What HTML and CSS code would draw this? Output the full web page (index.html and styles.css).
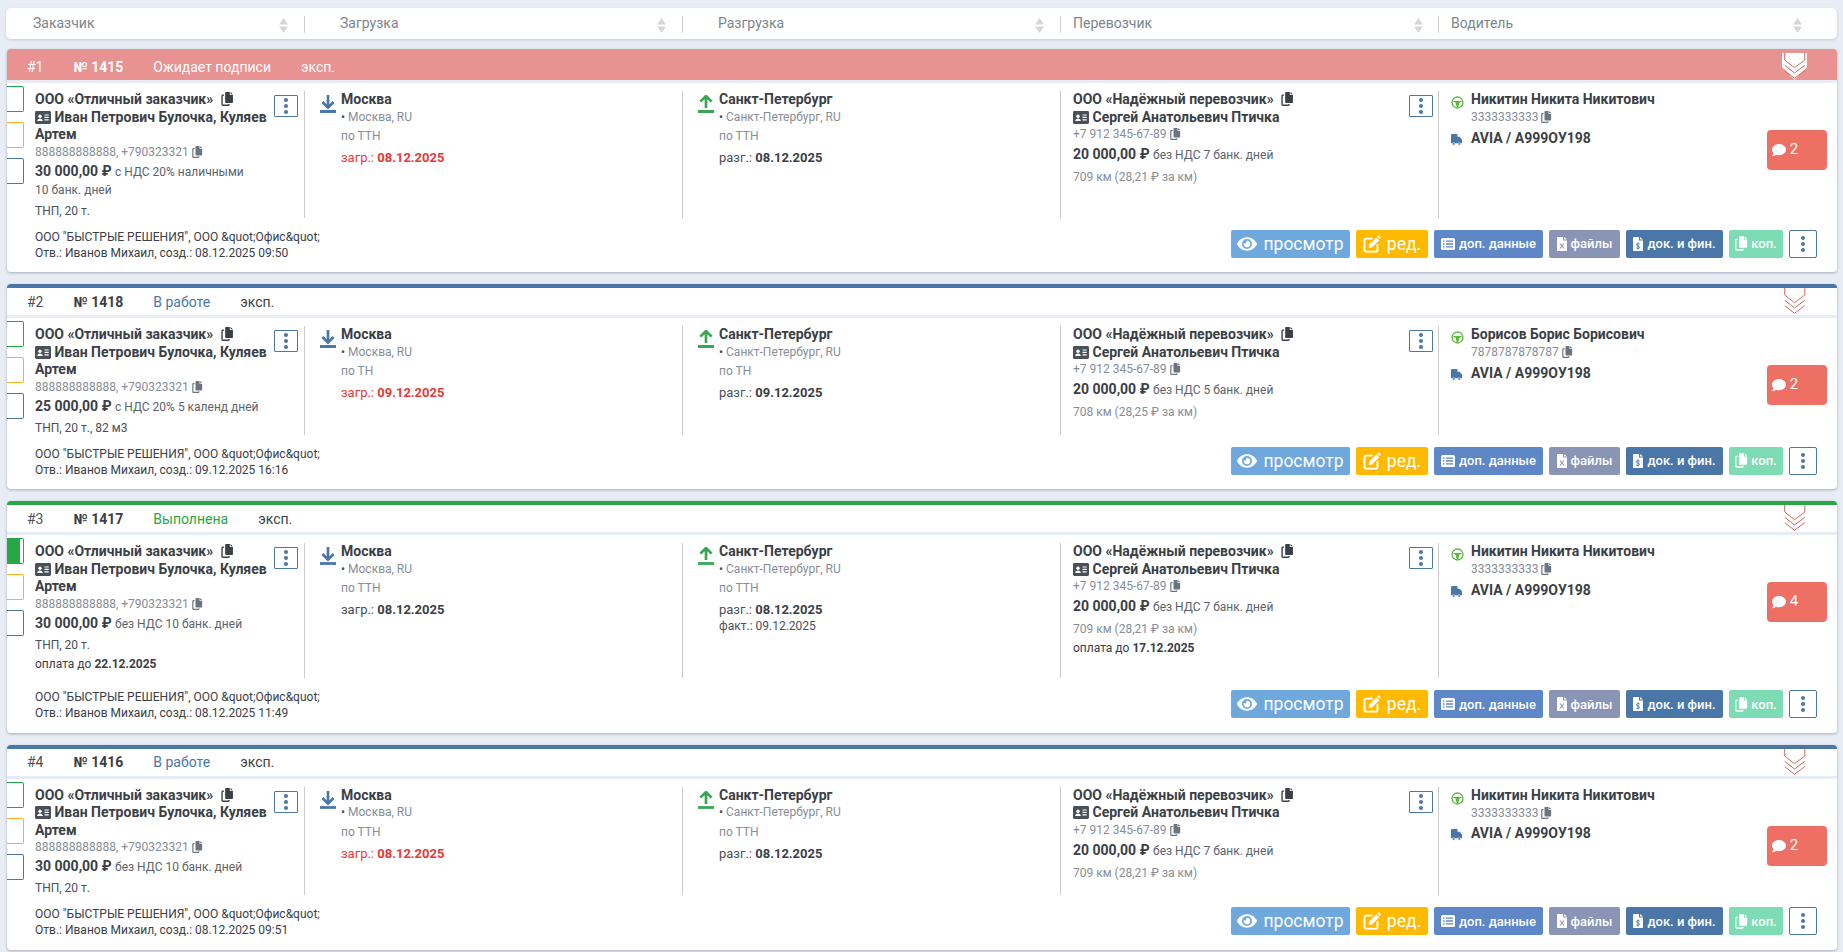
FILE: index.html
```html
<!DOCTYPE html>
<html lang="ru">
<head>
<meta charset="utf-8">
<title>Заявки</title>
<link rel="stylesheet" href="styles.css">
</head>
<body>
<svg class="sprite" width="0" height="0" aria-hidden="true">
  <symbol id="i-copy" viewBox="0 0 16 18"><path d="M6 0h5v4h4v9.2c0 .6-.4 1-1 1H6c-.6 0-1-.4-1-1V1c0-.6.4-1 1-1zM12 0l3 3h-3z" fill="currentColor"/><path d="M3.6 4H2c-.6 0-1 .4-1 1v11c0 .6.4 1 1 1h7c.6 0 1-.4 1-1v-.6" fill="none" stroke="currentColor" stroke-width="1.8"/></symbol>
  <symbol id="i-id" viewBox="0 0 16 13"><rect width="16" height="13" rx="1.4" fill="currentColor"/><circle cx="5" cy="5.2" r="1.7" fill="#fff"/><path d="M2.2 10c0-1.8 1.2-2.6 2.8-2.6s2.8.8 2.8 2.6z" fill="#fff"/><path d="M9.5 4h4.2M9.5 6.4h4.2M9.5 8.8h4.2" stroke="#fff" stroke-width="1.2"/></symbol>
  <symbol id="i-down" viewBox="0 0 16 18"><path d="M8 0v12.500M2.400 7 8 12.600 13.600 7" fill="none" stroke="#4a76a8" stroke-width="2.700"/><path d="M0 16.500h16" stroke="#4a76a8" stroke-width="2.800"/></symbol>
  <symbol id="i-up" viewBox="0 0 16 18"><path d="M8 13V1M2.400 6.600 8 1l5.600 5.600" fill="none" stroke="#3aa655" stroke-width="2.700"/><path d="M0 16.500h16" stroke="#3aa655" stroke-width="2.800"/></symbol>
  <symbol id="i-wheel" viewBox="0 0 14 14"><circle cx="7" cy="7" r="5.900" fill="none" stroke="#5cb83c" stroke-width="1.400"/><path d="M1.600 5.400h10.800L9 7.200 7.900 12H6.100L5 7.200z" fill="#5cb83c"/></symbol>
  <symbol id="i-truck" viewBox="0 0 12 14"><path d="M0 2.500C0 1.700.5 1 1.200 1H7v3h2.400L12 7v4H0z" fill="#4a76a8"/><circle cx="3" cy="11.800" r="1.400" fill="#4a76a8" stroke="#fff" stroke-width=".6"/><circle cx="9" cy="11.800" r="1.400" fill="#4a76a8" stroke="#fff" stroke-width=".6"/></symbol>
  <symbol id="i-comment" viewBox="0 0 512 512"><path d="M256 32C114.600 32 0 125.100 0 240c0 49.600 21.400 95 57 130.700C44.500 421.100 2.700 466 2.200 466.500c-2.200 2.300-2.800 5.700-1.500 8.700S4.800 480 8 480c66.300 0 116-31.800 140.600-51.400 32.700 12.300 69 19.400 107.400 19.400 141.400 0 256-93.100 256-208S397.400 32 256 32z" fill="currentColor"/></symbol>
  <symbol id="i-eye" viewBox="0 0 576 512"><path d="M572.520 241.400C518.290 135.590 410.930 64 288 64S57.680 135.640 3.480 241.410a32.400 32.400 0 0 0 0 29.190C57.710 376.410 165.070 448 288 448s230.320-71.640 284.520-177.410a32.400 32.400 0 0 0 0-29.190zM288 400a144 144 0 1 1 144-144 143.930 143.930 0 0 1-144 144zm0-240a95.310 95.310 0 0 0-25.310 3.790 47.850 47.850 0 0 1-66.900 66.900A95.780 95.780 0 1 0 288 160z" fill="currentColor"/></symbol>
  <symbol id="i-edit" viewBox="0 0 18 18"><path d="M14.500 10v5c0 1-.7 1.600-1.600 1.600H3.100c-.9 0-1.600-.7-1.600-1.600V5.200c0-.9.7-1.600 1.600-1.600h6" fill="none" stroke="currentColor" stroke-width="1.900" stroke-linecap="round"/><path d="M6.200 9.600 13.400 2.400l2.900 2.900-7.200 7.200-3.500.6zM14.300 1.500l.7-.7c.4-.4 1-.4 1.400 0l1 1c.4.4.4 1 0 1.400l-.7.700z" fill="currentColor"/></symbol>
  <symbol id="i-list" viewBox="0 0 14 12"><rect width="14" height="12" rx="1.600" fill="currentColor"/><path d="M2 3.200h1.500M5 3.200h7M2 6h1.500M5 6h7M2 8.800h1.500M5 8.800h7" stroke="#5d87c7" stroke-width="1.300"/></symbol>
  <symbol id="i-xls" viewBox="0 0 10 14"><path d="M1 0h5v3.500h4V13c0 .6-.4 1-1 1H1c-.6 0-1-.4-1-1V1c0-.6.4-1 1-1zM7 0l3 2.600H7z" fill="currentColor"/><path d="M3 6.500l4 5M7 6.500l-4 5" stroke="#8a94b5" stroke-width="1.100"/></symbol>
  <symbol id="i-inv" viewBox="0 0 10 14"><path d="M1 0h5v3.500h4V13c0 .6-.4 1-1 1H1c-.6 0-1-.4-1-1V1c0-.6.4-1 1-1zM7 0l3 2.600H7z" fill="currentColor"/><path d="M6.600 7C6.200 6.400 3.400 6.200 3.400 7.700s3.200 1.100 3.200 2.600-2.800 1.300-3.200.7M5 5.500v7" fill="none" stroke="#4a76a8" stroke-width=".9"/></symbol>
  <symbol id="i-dup" viewBox="0 0 16 18"><path d="M6 0h5v4h4v9.200c0 .6-.4 1-1 1H6c-.6 0-1-.4-1-1V1c0-.6.4-1 1-1zM12 0l3 3h-3z" fill="currentColor"/><path d="M3.600 4H2c-.6 0-1 .4-1 1v11c0 .6.4 1 1 1h7c.6 0 1-.4 1-1v-.6" fill="none" stroke="currentColor" stroke-width="1.600"/></symbol>
  <symbol id="i-sort" viewBox="0 0 9 15"><path d="M4.500 0 9 6.600H0zM4.500 15 0 8.400h9z" fill="#d3d7dc"/></symbol>
  <symbol id="i-ribbon" viewBox="0 0 25 31"><path d="M0 0h25v18L12.500 31 0 18z" fill="#fff"/><path d="M2.700 0v11l9.800 7.700 10.300-7.700V0" fill="none" stroke="#d4685c" stroke-width="1"/><path d="M2.700 16.300l9.800 7.700 10.300-7.700M2.700 21.600l9.800 7.700 10.300-7.700" fill="none" stroke="#d4685c" stroke-width="1"/></symbol>
</svg>

<div class="page">
  <div class="thead">
    <div class="th th-first"><span>Заказчик</span><svg class="sort"><use href="#i-sort"/></svg></div>
    <div class="th th-wide"><span>Загрузка</span><svg class="sort"><use href="#i-sort"/></svg></div>
    <div class="th th-wide"><span>Разгрузка</span><svg class="sort"><use href="#i-sort"/></svg></div>
    <div class="th"><span>Перевозчик</span><svg class="sort"><use href="#i-sort"/></svg></div>
    <div class="th th-last"><span>Водитель</span><svg class="sort"><use href="#i-sort"/></svg></div>
  </div>

  <article class="card card-red">
    <header class="strip">
      <span class="idx">#1</span><b class="num">№ 1415</b><span class="status">Ожидает подписи</span><span class="kind">эксп.</span>
      <svg class="ribbon"><use href="#i-ribbon"/></svg>
    </header>
    <div class="body">
      <div class="cols">
        <div class="col col-client">
          <div class="marks"><i class="mark m-green"></i><i class="mark m-orange"></i><i class="mark m-blue"></i></div>
          <div class="info">
            <div class="title">ООО «Отличный заказчик» <svg class="copy copy-lg"><use href="#i-copy"/></svg></div>
            <div class="title"><svg class="idc"><use href="#i-id"/></svg> Иван Петрович Булочка, Куляев Артем</div>
            <div class="phone">888888888888, +790323321 <svg class="copy"><use href="#i-copy"/></svg></div>
            <div class="price"><b>30 000,00 ₽</b> <small>с НДС 20% наличными <span class="nw">10 банк. дней</span></small></div>
            <div class="cargo">ТНП, 20 т.</div>
          </div>
          <button class="kebab" type="button"><i></i><i></i><i></i></button>
        </div>
        <div class="col col-point">
          <svg class="dir"><use href="#i-down"/></svg>
          <div class="info">
            <div class="title">Москва</div>
            <div class="place"><i class="dot">•</i> Москва, RU</div>
            <div class="doc">по ТТН</div>
            <div class="date late">загр.: <b>08.12.2025</b></div>
          </div>
        </div>
        <div class="col col-point">
          <svg class="dir"><use href="#i-up"/></svg>
          <div class="info">
            <div class="title">Санкт-Петербург</div>
            <div class="place"><i class="dot">•</i> Санкт-Петербург, RU</div>
            <div class="doc">по ТТН</div>
            <div class="date">разг.: <b>08.12.2025</b></div>
          </div>
        </div>
        <div class="col col-carrier">
          <div class="info">
            <div class="title">ООО «Надёжный перевозчик» <svg class="copy copy-lg"><use href="#i-copy"/></svg></div>
            <div class="title"><svg class="idc"><use href="#i-id"/></svg> Сергей Анатольевич Птичка</div>
            <div class="phone">+7 912 345-67-89 <svg class="copy"><use href="#i-copy"/></svg></div>
            <div class="price price-c"><b>20 000,00 ₽</b> <small>без НДС 7 банк. дней</small></div>
            <div class="km">709 км (28,21 ₽ за км)</div>
          </div>
          <button class="kebab" type="button"><i></i><i></i><i></i></button>
        </div>
        <div class="col col-driver">
          <div class="driver">
            <div class="dline"><svg class="wheel"><use href="#i-wheel"/></svg><div class="title">Никитин Никита Никитович</div></div>
            <div class="phone dphone">3333333333 <svg class="copy"><use href="#i-copy"/></svg></div>
            <div class="dline dtruck"><svg class="truck"><use href="#i-truck"/></svg><div class="title">AVIA / А999ОУ198</div></div>
          </div>
          <div class="badge"><svg><use href="#i-comment"/></svg> 2</div>
        </div>
      </div>
      <div class="foot">
        <div class="meta">ООО "БЫСТРЫЕ РЕШЕНИЯ", ООО &amp;quot;Офис&amp;quot;<br>Отв.: Иванов Михаил, созд.: 08.12.2025 09:50</div>
        <div class="actions">
          <a class="btn btn-lg b-view"><svg class="ic-eye"><use href="#i-eye"/></svg>просмотр</a>
          <a class="btn btn-lg b-edit"><svg class="ic-edit"><use href="#i-edit"/></svg>ред.</a>
          <a class="btn b-extra"><svg class="ic-list"><use href="#i-list"/></svg>доп. данные</a>
          <a class="btn b-files"><svg class="ic-file"><use href="#i-xls"/></svg>файлы</a>
          <a class="btn b-docs"><svg class="ic-file"><use href="#i-inv"/></svg>док. и фин.</a>
          <a class="btn b-copy"><svg class="ic-dup"><use href="#i-dup"/></svg>коп.</a>
          <button class="kebab kebab-lg" type="button"><i></i><i></i><i></i></button>
        </div>
      </div>
    </div>
  </article>

  <article class="card card-blue">
    <header class="strip">
      <span class="idx">#2</span><b class="num">№ 1418</b><span class="status">В работе</span><span class="kind">эксп.</span>
      <svg class="ribbon"><use href="#i-ribbon"/></svg>
    </header>
    <div class="body">
      <div class="cols">
        <div class="col col-client">
          <div class="marks"><i class="mark m-green"></i><i class="mark m-orange"></i><i class="mark m-blue"></i></div>
          <div class="info">
            <div class="title">ООО «Отличный заказчик» <svg class="copy copy-lg"><use href="#i-copy"/></svg></div>
            <div class="title"><svg class="idc"><use href="#i-id"/></svg> Иван Петрович Булочка, Куляев Артем</div>
            <div class="phone">888888888888, +790323321 <svg class="copy"><use href="#i-copy"/></svg></div>
            <div class="price"><b>25 000,00 ₽</b> <small>с НДС 20% <span class="nw">5 календ дней</span></small></div>
            <div class="cargo">ТНП, 20 т., 82 м3</div>
          </div>
          <button class="kebab" type="button"><i></i><i></i><i></i></button>
        </div>
        <div class="col col-point">
          <svg class="dir"><use href="#i-down"/></svg>
          <div class="info">
            <div class="title">Москва</div>
            <div class="place"><i class="dot">•</i> Москва, RU</div>
            <div class="doc">по ТН</div>
            <div class="date late">загр.: <b>09.12.2025</b></div>
          </div>
        </div>
        <div class="col col-point">
          <svg class="dir"><use href="#i-up"/></svg>
          <div class="info">
            <div class="title">Санкт-Петербург</div>
            <div class="place"><i class="dot">•</i> Санкт-Петербург, RU</div>
            <div class="doc">по ТН</div>
            <div class="date">разг.: <b>09.12.2025</b></div>
          </div>
        </div>
        <div class="col col-carrier">
          <div class="info">
            <div class="title">ООО «Надёжный перевозчик» <svg class="copy copy-lg"><use href="#i-copy"/></svg></div>
            <div class="title"><svg class="idc"><use href="#i-id"/></svg> Сергей Анатольевич Птичка</div>
            <div class="phone">+7 912 345-67-89 <svg class="copy"><use href="#i-copy"/></svg></div>
            <div class="price price-c"><b>20 000,00 ₽</b> <small>без НДС 5 банк. дней</small></div>
            <div class="km">708 км (28,25 ₽ за км)</div>
          </div>
          <button class="kebab" type="button"><i></i><i></i><i></i></button>
        </div>
        <div class="col col-driver">
          <div class="driver">
            <div class="dline"><svg class="wheel"><use href="#i-wheel"/></svg><div class="title">Борисов Борис Борисович</div></div>
            <div class="phone dphone">7878787878787 <svg class="copy"><use href="#i-copy"/></svg></div>
            <div class="dline dtruck"><svg class="truck"><use href="#i-truck"/></svg><div class="title">AVIA / А999ОУ198</div></div>
          </div>
          <div class="badge"><svg><use href="#i-comment"/></svg> 2</div>
        </div>
      </div>
      <div class="foot">
        <div class="meta">ООО "БЫСТРЫЕ РЕШЕНИЯ", ООО &amp;quot;Офис&amp;quot;<br>Отв.: Иванов Михаил, созд.: 09.12.2025 16:16</div>
        <div class="actions">
          <a class="btn btn-lg b-view"><svg class="ic-eye"><use href="#i-eye"/></svg>просмотр</a>
          <a class="btn btn-lg b-edit"><svg class="ic-edit"><use href="#i-edit"/></svg>ред.</a>
          <a class="btn b-extra"><svg class="ic-list"><use href="#i-list"/></svg>доп. данные</a>
          <a class="btn b-files"><svg class="ic-file"><use href="#i-xls"/></svg>файлы</a>
          <a class="btn b-docs"><svg class="ic-file"><use href="#i-inv"/></svg>док. и фин.</a>
          <a class="btn b-copy"><svg class="ic-dup"><use href="#i-dup"/></svg>коп.</a>
          <button class="kebab kebab-lg" type="button"><i></i><i></i><i></i></button>
        </div>
      </div>
    </div>
  </article>

  <article class="card card-green">
    <header class="strip">
      <span class="idx">#3</span><b class="num">№ 1417</b><span class="status">Выполнена</span><span class="kind">эксп.</span>
      <svg class="ribbon"><use href="#i-ribbon"/></svg>
    </header>
    <div class="body">
      <div class="cols">
        <div class="col col-client">
          <div class="marks"><i class="mark m-green m-done"></i><i class="mark m-orange"></i><i class="mark m-blue"></i></div>
          <div class="info">
            <div class="title">ООО «Отличный заказчик» <svg class="copy copy-lg"><use href="#i-copy"/></svg></div>
            <div class="title"><svg class="idc"><use href="#i-id"/></svg> Иван Петрович Булочка, Куляев Артем</div>
            <div class="phone">888888888888, +790323321 <svg class="copy"><use href="#i-copy"/></svg></div>
            <div class="price"><b>30 000,00 ₽</b> <small>без НДС <span class="nw">10 банк. дней</span></small></div>
            <div class="cargo">ТНП, 20 т.</div>
            <div class="pay">оплата до <b>22.12.2025</b></div>
          </div>
          <button class="kebab" type="button"><i></i><i></i><i></i></button>
        </div>
        <div class="col col-point">
          <svg class="dir"><use href="#i-down"/></svg>
          <div class="info">
            <div class="title">Москва</div>
            <div class="place"><i class="dot">•</i> Москва, RU</div>
            <div class="doc">по ТТН</div>
            <div class="date">загр.: <b>08.12.2025</b></div>
          </div>
        </div>
        <div class="col col-point">
          <svg class="dir"><use href="#i-up"/></svg>
          <div class="info">
            <div class="title">Санкт-Петербург</div>
            <div class="place"><i class="dot">•</i> Санкт-Петербург, RU</div>
            <div class="doc">по ТТН</div>
            <div class="date">разг.: <b>08.12.2025</b></div>
            <div class="fact">факт.: 09.12.2025</div>
          </div>
        </div>
        <div class="col col-carrier">
          <div class="info">
            <div class="title">ООО «Надёжный перевозчик» <svg class="copy copy-lg"><use href="#i-copy"/></svg></div>
            <div class="title"><svg class="idc"><use href="#i-id"/></svg> Сергей Анатольевич Птичка</div>
            <div class="phone">+7 912 345-67-89 <svg class="copy"><use href="#i-copy"/></svg></div>
            <div class="price price-c"><b>20 000,00 ₽</b> <small>без НДС 7 банк. дней</small></div>
            <div class="km">709 км (28,21 ₽ за км)</div>
            <div class="pay pay-c">оплата до <b>17.12.2025</b></div>
          </div>
          <button class="kebab" type="button"><i></i><i></i><i></i></button>
        </div>
        <div class="col col-driver">
          <div class="driver">
            <div class="dline"><svg class="wheel"><use href="#i-wheel"/></svg><div class="title">Никитин Никита Никитович</div></div>
            <div class="phone dphone">3333333333 <svg class="copy"><use href="#i-copy"/></svg></div>
            <div class="dline dtruck"><svg class="truck"><use href="#i-truck"/></svg><div class="title">AVIA / А999ОУ198</div></div>
          </div>
          <div class="badge"><svg><use href="#i-comment"/></svg> 4</div>
        </div>
      </div>
      <div class="foot">
        <div class="meta">ООО "БЫСТРЫЕ РЕШЕНИЯ", ООО &amp;quot;Офис&amp;quot;<br>Отв.: Иванов Михаил, созд.: 08.12.2025 11:49</div>
        <div class="actions">
          <a class="btn btn-lg b-view"><svg class="ic-eye"><use href="#i-eye"/></svg>просмотр</a>
          <a class="btn btn-lg b-edit"><svg class="ic-edit"><use href="#i-edit"/></svg>ред.</a>
          <a class="btn b-extra"><svg class="ic-list"><use href="#i-list"/></svg>доп. данные</a>
          <a class="btn b-files"><svg class="ic-file"><use href="#i-xls"/></svg>файлы</a>
          <a class="btn b-docs"><svg class="ic-file"><use href="#i-inv"/></svg>док. и фин.</a>
          <a class="btn b-copy"><svg class="ic-dup"><use href="#i-dup"/></svg>коп.</a>
          <button class="kebab kebab-lg" type="button"><i></i><i></i><i></i></button>
        </div>
      </div>
    </div>
  </article>

  <article class="card card-blue">
    <header class="strip">
      <span class="idx">#4</span><b class="num">№ 1416</b><span class="status">В работе</span><span class="kind">эксп.</span>
      <svg class="ribbon"><use href="#i-ribbon"/></svg>
    </header>
    <div class="body">
      <div class="cols">
        <div class="col col-client">
          <div class="marks"><i class="mark m-green"></i><i class="mark m-orange"></i><i class="mark m-blue"></i></div>
          <div class="info">
            <div class="title">ООО «Отличный заказчик» <svg class="copy copy-lg"><use href="#i-copy"/></svg></div>
            <div class="title"><svg class="idc"><use href="#i-id"/></svg> Иван Петрович Булочка, Куляев Артем</div>
            <div class="phone">888888888888, +790323321 <svg class="copy"><use href="#i-copy"/></svg></div>
            <div class="price"><b>30 000,00 ₽</b> <small>без НДС <span class="nw">10 банк. дней</span></small></div>
            <div class="cargo">ТНП, 20 т.</div>
          </div>
          <button class="kebab" type="button"><i></i><i></i><i></i></button>
        </div>
        <div class="col col-point">
          <svg class="dir"><use href="#i-down"/></svg>
          <div class="info">
            <div class="title">Москва</div>
            <div class="place"><i class="dot">•</i> Москва, RU</div>
            <div class="doc">по ТТН</div>
            <div class="date late">загр.: <b>08.12.2025</b></div>
          </div>
        </div>
        <div class="col col-point">
          <svg class="dir"><use href="#i-up"/></svg>
          <div class="info">
            <div class="title">Санкт-Петербург</div>
            <div class="place"><i class="dot">•</i> Санкт-Петербург, RU</div>
            <div class="doc">по ТТН</div>
            <div class="date">разг.: <b>08.12.2025</b></div>
          </div>
        </div>
        <div class="col col-carrier">
          <div class="info">
            <div class="title">ООО «Надёжный перевозчик» <svg class="copy copy-lg"><use href="#i-copy"/></svg></div>
            <div class="title"><svg class="idc"><use href="#i-id"/></svg> Сергей Анатольевич Птичка</div>
            <div class="phone">+7 912 345-67-89 <svg class="copy"><use href="#i-copy"/></svg></div>
            <div class="price price-c"><b>20 000,00 ₽</b> <small>без НДС 7 банк. дней</small></div>
            <div class="km">709 км (28,21 ₽ за км)</div>
          </div>
          <button class="kebab" type="button"><i></i><i></i><i></i></button>
        </div>
        <div class="col col-driver">
          <div class="driver">
            <div class="dline"><svg class="wheel"><use href="#i-wheel"/></svg><div class="title">Никитин Никита Никитович</div></div>
            <div class="phone dphone">3333333333 <svg class="copy"><use href="#i-copy"/></svg></div>
            <div class="dline dtruck"><svg class="truck"><use href="#i-truck"/></svg><div class="title">AVIA / А999ОУ198</div></div>
          </div>
          <div class="badge"><svg><use href="#i-comment"/></svg> 2</div>
        </div>
      </div>
      <div class="foot">
        <div class="meta">ООО "БЫСТРЫЕ РЕШЕНИЯ", ООО &amp;quot;Офис&amp;quot;<br>Отв.: Иванов Михаил, созд.: 08.12.2025 09:51</div>
        <div class="actions">
          <a class="btn btn-lg b-view"><svg class="ic-eye"><use href="#i-eye"/></svg>просмотр</a>
          <a class="btn btn-lg b-edit"><svg class="ic-edit"><use href="#i-edit"/></svg>ред.</a>
          <a class="btn b-extra"><svg class="ic-list"><use href="#i-list"/></svg>доп. данные</a>
          <a class="btn b-files"><svg class="ic-file"><use href="#i-xls"/></svg>файлы</a>
          <a class="btn b-docs"><svg class="ic-file"><use href="#i-inv"/></svg>док. и фин.</a>
          <a class="btn b-copy"><svg class="ic-dup"><use href="#i-dup"/></svg>коп.</a>
          <button class="kebab kebab-lg" type="button"><i></i><i></i><i></i></button>
        </div>
      </div>
    </div>
  </article>
</div>
</body>
</html>
```
FILE: styles.css
```css
* { box-sizing: border-box; }
html, body { margin: 0; height: 100%; overflow: hidden; }
body {
  background: #e8edf5;
  font-family: Roboto, "Noto Sans", sans-serif;
  font-size: 12px;
  color: #3a4046;
}
.sprite { position: absolute; }
.page { padding: 8px 6px 0 7px; display: flex; flex-direction: column; gap: 12px; }

/* table head */
.thead {
  display: grid;
  grid-template-columns: 298px 378px 378px 378px 1fr;
  height: 31px;
  margin: 0 0 -2px -1px;
  padding-top: 8px;
  background: #fff;
  border-radius: 5px;
  box-shadow: 0 1px 3px rgba(90, 100, 120, .25);
  color: #7d858c;
  font-size: 14px;
}
.th {
  height: 17px;
  display: flex;
  align-items: center;
  justify-content: space-between;
  padding: 0 15px 0 12px;
  border-left: 1px solid #ccd0d5;
  line-height: 17px;
}
.th span { position: relative; top: -1px; }
.th-first { border-left: 0; padding-left: 27px; padding-right: 16px; }
.th-wide { padding-left: 35px; padding-right: 16px; }
.th-last { padding-right: 35px; }
.sort { width: 9px; height: 15px; margin-top: 2px; }

/* card */
.card {
  position: relative;
  background: #fff;
  border-radius: 4px;
  border-top: 4px solid #4a76a8;
  box-shadow: 0 1px 3px rgba(70, 80, 100, .4);
  overflow: hidden;
}
.strip {
  position: relative;
  height: 27px;
  display: flex;
  align-items: center;
  gap: 30px;
  padding-left: 20px;
  font-size: 14px;
  background: #fff;
}
.idx { color: #495057; }
.num { font-weight: 700; color: #3a4046; }
.kind { color: #3a4046; }
.card-blue .status { color: #4a76a8; }
.card-green { border-top-color: #28a745; }
.card-green .status { color: #28a745; }
.card-red { border-top-color: #e89292; }
.card-red .strip { background: #e89292; }
.card-red .strip span, .card-red .strip b { color: #fff; }
.ribbon {
  position: absolute;
  top: -4px;
  left: 1775px;
  width: 25px;
  height: 31px;
}
.body {
  border-top: 3px solid #e8edf5;
  padding: 8px 0 14.5px;
}
.cols {
  display: grid;
  grid-template-columns: 297px 378px 378px 378px 1fr;
  min-height: 108.5px;
}
.col {
  display: flex;
  align-items: flex-start;
  border-left: 1px solid #c8ccd0;
}
.col-client { border-left: 0; padding-right: 6px; }
.col-client .info { flex: 1; min-width: 0; margin-left: 11px; }
.marks {
  flex: none;
  width: 17px;
  display: flex;
  flex-direction: column;
  gap: 10px;
  margin-top: -5px;
}
.mark {
  display: block;
  height: 26px;
  background: #fff;
  border: 1px solid;
  border-left: 0;
  border-radius: 0 2px 2px 0;
}
.m-green { border-color: #28a745; }
.m-orange { border-color: #ffb020; }
.m-blue { border-color: #4a76a8; }
.m-done { background: linear-gradient(90deg, #28a745 0 13px, #fff 13px); }

.title { font-size: 14px; font-weight: 700; line-height: 17.5px; color: #3a4046; }
.phone { line-height: 17px; color: #868e96; font-size: 12px; }
.price { line-height: 18px; margin-top: 1px; font-size: 14px; }
.price small { font-size: 12px; line-height: 1; color: #5c636a; }
.price-c { margin-top: 2px; }
.nw { white-space: nowrap; }
.cargo { margin-top: 6px; line-height: 14px; color: #495057; }
.pay { margin: 4px 0 6.5px; line-height: 16px; color: #3a4046; }
.pay-c { margin: 1px 0 0; }
.copy { width: 11px; height: 12px; vertical-align: -2px; color: #6c757d; }
.copy-lg { width: 13px; height: 14px; margin-left: 4px; vertical-align: -2px; color: #3a4046; }
.idc { width: 16px; height: 13px; vertical-align: -2px; color: #495057; }

.col-point { padding-left: 15px; }
.dir { flex: none; width: 16px; height: 18px; margin: 4px 5px 0 0; }
.place { line-height: 16px; color: #868e96; }
.dot { font-style: normal; color: #495057; }
.doc { margin-top: 3.5px; line-height: 17px; color: #868e96; }
.date { margin-top: 4px; line-height: 17px; color: #495057; font-size: 13px; }
.date b { color: #3a4046; }
.date.late, .date.late b { color: #e53935; }
.fact { margin-top: 1px; line-height: 15px; color: #495057; }

.col-carrier { padding: 0 5px 0 12px; justify-content: space-between; }
.km { margin-top: 5px; line-height: 19px; color: #868e96; }

.col-driver { padding-left: 12px; padding-right: 10px; justify-content: space-between; }
.driver { flex: 1; min-width: 0; }
.dline { display: flex; align-items: flex-start; }
.wheel { flex: none; width: 13px; height: 13px; margin: 5px 7px 0 0; }
.truck { flex: none; width: 11px; height: 13px; margin: 3px 9px 0 0; }
.dphone { margin-left: 20px; }
.dtruck { margin-top: 3.5px; }

.badge {
  flex: none;
  width: 60px;
  height: 40px;
  margin-top: 39px;
  padding: 10px 0 0 5px;
  background: #ee7064;
  border-radius: 4px;
  color: #fff;
  font-size: 15px;
  line-height: 18px;
}
.badge svg { width: 14px; height: 14px; vertical-align: -3px; }

.kebab {
  flex: none;
  display: flex;
  flex-direction: column;
  align-items: center;
  justify-content: center;
  gap: 2px;
  width: 24px;
  height: 22px;
  margin-top: 4px;
  padding: 0;
  background: #fff;
  border: 1px solid #4a76a8;
  border-radius: 1px;
}
.kebab i { width: 4px; height: 4px; border-radius: 50%; background: #4a76a8; }
.kebab-lg { width: 28px; height: 28px; margin: 0; border-radius: 2px; }

.foot {
  display: flex;
  justify-content: space-between;
  align-items: flex-start;
  margin-top: 12px;
  padding: 0 20px 0 28px;
}
.meta { line-height: 16px; margin: -1px 0 -3px; color: #3a4046; }
.actions { display: flex; gap: 6px; }
.btn {
  display: flex;
  align-items: center;
  justify-content: center;
  height: 28px;
  border-radius: 2px;
  color: #fff;
  font-size: 13px;
  font-weight: 500;
  white-space: nowrap;
}
.btn svg { flex: none; }
.btn-lg { font-size: 17.5px; font-weight: 400; }
.b-view { width: 119px; background: #6fa8dc; }
.b-edit { width: 72px; background: #ffba00; }
.b-extra { width: 109px; background: #5d87c7; }
.b-files { width: 71px; background: #8a94b5; }
.b-docs { width: 97px; background: #4a76a8; }
.b-copy { width: 54px; background: #7ddcb3; }
.ic-eye { width: 20px; height: 18px; margin-right: 6px; }
.ic-edit { width: 18px; height: 18px; margin-right: 6px; }
.ic-list { width: 14px; height: 12px; margin-right: 4px; }
.ic-file { width: 10px; height: 14px; margin-right: 4px; }
.ic-dup { width: 13px; height: 15px; margin-right: 3px; }
```
